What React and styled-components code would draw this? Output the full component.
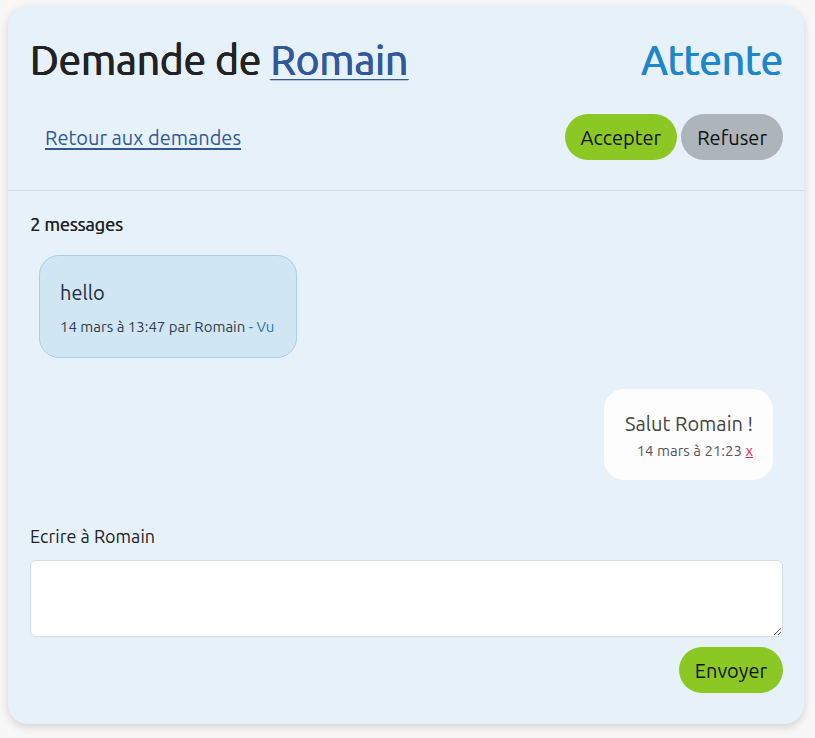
import React from 'react';
import styled, { createGlobalStyle } from 'styled-components';

const GlobalStyle = createGlobalStyle`
  html, body {
    margin: 0;
    background: #f7f7f7;
    font-family: "Ubuntu", "Noto Sans", sans-serif;
    color: #222;
  }
`;

const Page = styled.div`
  padding: 6px 11px 15px 8px;
`;

const Card = styled.div`
  background-color: #e7f1f9;
  border-radius: 20px;
  box-shadow: 0 3px 8px rgba(0, 0, 0, 0.15);
  overflow: hidden;
`;

const Header = styled.div`
  padding: 30px 21px 30px 22px;
  border-bottom: 1px solid #d3dde6;
`;

const TitleRow = styled.div`
  display: flex;
  justify-content: space-between;
  align-items: baseline;
`;

// no medium cut of Ubuntu here, so thicken the regular one a little
const Title = styled.h1`
  margin: 0;
  font-size: 40.5px;
  font-weight: 400;
  line-height: 48px;
  color: #222;
  text-shadow: 0.7px 0 0 currentColor, -0.4px 0 0 currentColor, 0 0.3px 0 currentColor;
`;

const NameLink = styled.a`
  color: #31599a;
  text-decoration: underline;
  text-decoration-thickness: 1px;
  text-underline-offset: 4px;
`;

const Status = styled.span`
  font-size: 40.5px;
  color: #1f87c9;
  text-shadow: 0.7px 0 0 currentColor, -0.4px 0 0 currentColor, 0 0.3px 0 currentColor;
`;

const ActionRow = styled.div`
  display: flex;
  justify-content: space-between;
  align-items: center;
  margin-top: 30px;
`;

const BackLink = styled.a`
  margin-left: 15px;
  font-size: 20px;
  color: #31599a;
  text-decoration: underline;
  text-underline-offset: 3px;
`;

const Buttons = styled.div`
  display: flex;
  gap: 4px;
`;

const PillButton = styled.button`
  height: 46px;
  padding: 0 16px;
  border: none;
  border-radius: 23px;
  font-family: inherit;
  font-size: 20px;
  color: #111;
  background-color: ${(p) => (p.$tone === 'grey' ? '#adb4ba' : '#8bc824')};
  cursor: pointer;
`;

const Body = styled.div`
  padding: 23px 21px 31px 22px;
`;

const Count = styled.div`
  font-size: 18px;
  margin-bottom: 21px;
  text-shadow: 0.5px 0 0 currentColor;
`;

const Thread = styled.div`
  display: flex;
  flex-direction: column;
  gap: 31px;
  padding: 0 10px 0 9px;
`;

const Bubble = styled.div`
  align-self: ${(p) => (p.$mine ? 'flex-end' : 'flex-start')};
  background-color: ${(p) => (p.$mine ? '#fdfdfd' : '#d0e6f3')};
  border: 1px solid ${(p) => (p.$mine ? '#fdfdfd' : '#a8cfea')};
  border-radius: 20px;
  padding: ${(p) => (p.$mine ? '22px 19px 19px 20px' : '25px 22px 21px 20px')};
  text-align: ${(p) => (p.$mine ? 'right' : 'left')};
`;

const BubbleText = styled.div`
  font-size: 20px;
  color: ${(p) => (p.$mine ? '#444' : '#1d2a3a')};
  line-height: 24px;
`;

const Meta = styled.div`
  margin-top: ${(p) => (p.$mine ? '6px' : '13px')};
  font-size: 15px;
  line-height: 18px;
  color: ${(p) => (p.$mine ? '#555' : '#333c48')};
`;

const Seen = styled.span`
  color: #3571a6;
`;

const DeleteLink = styled.a`
  color: #e0245e;
  text-decoration: underline;
`;

const Form = styled.form`
  margin-top: 46px;
  display: flex;
  flex-direction: column;
`;

const Label = styled.label`
  font-size: 18px;
  color: #222;
  margin-bottom: 14px;
`;

const TextArea = styled.textarea`
  height: 77px;
  box-sizing: border-box;
  border: 1px solid #d6dde3;
  border-radius: 6px;
  background: #fff;
  font-family: inherit;
  font-size: 16px;
`;

const FormActions = styled.div`
  display: flex;
  justify-content: flex-end;
  margin-top: 10px;
`;

export default function App() {
  return (
    <>
      <GlobalStyle />
      <Page>
        <Card>
          <Header>
            <TitleRow>
              <Title>
                Demande de <NameLink href="#">Romain</NameLink>
              </Title>
              <Status>Attente</Status>
            </TitleRow>
            <ActionRow>
              <BackLink href="#">Retour aux demandes</BackLink>
              <Buttons>
                <PillButton type="button">Accepter</PillButton>
                <PillButton type="button" $tone="grey">Refuser</PillButton>
              </Buttons>
            </ActionRow>
          </Header>
          <Body>
            <Count>2 messages</Count>
            <Thread>
              <Bubble>
                <BubbleText>hello</BubbleText>
                <Meta>
                  14 mars à 13:47 par Romain <Seen>- Vu</Seen>
                </Meta>
              </Bubble>
              <Bubble $mine>
                <BubbleText $mine>Salut Romain !</BubbleText>
                <Meta $mine>
                  14 mars à 21:23 <DeleteLink href="#">x</DeleteLink>
                </Meta>
              </Bubble>
            </Thread>
            <Form onSubmit={(e) => e.preventDefault()}>
              <Label htmlFor="msg">Ecrire à Romain</Label>
              <TextArea id="msg" />
              <FormActions>
                <PillButton type="submit">Envoyer</PillButton>
              </FormActions>
            </Form>
          </Body>
        </Card>
      </Page>
    </>
  );
}
